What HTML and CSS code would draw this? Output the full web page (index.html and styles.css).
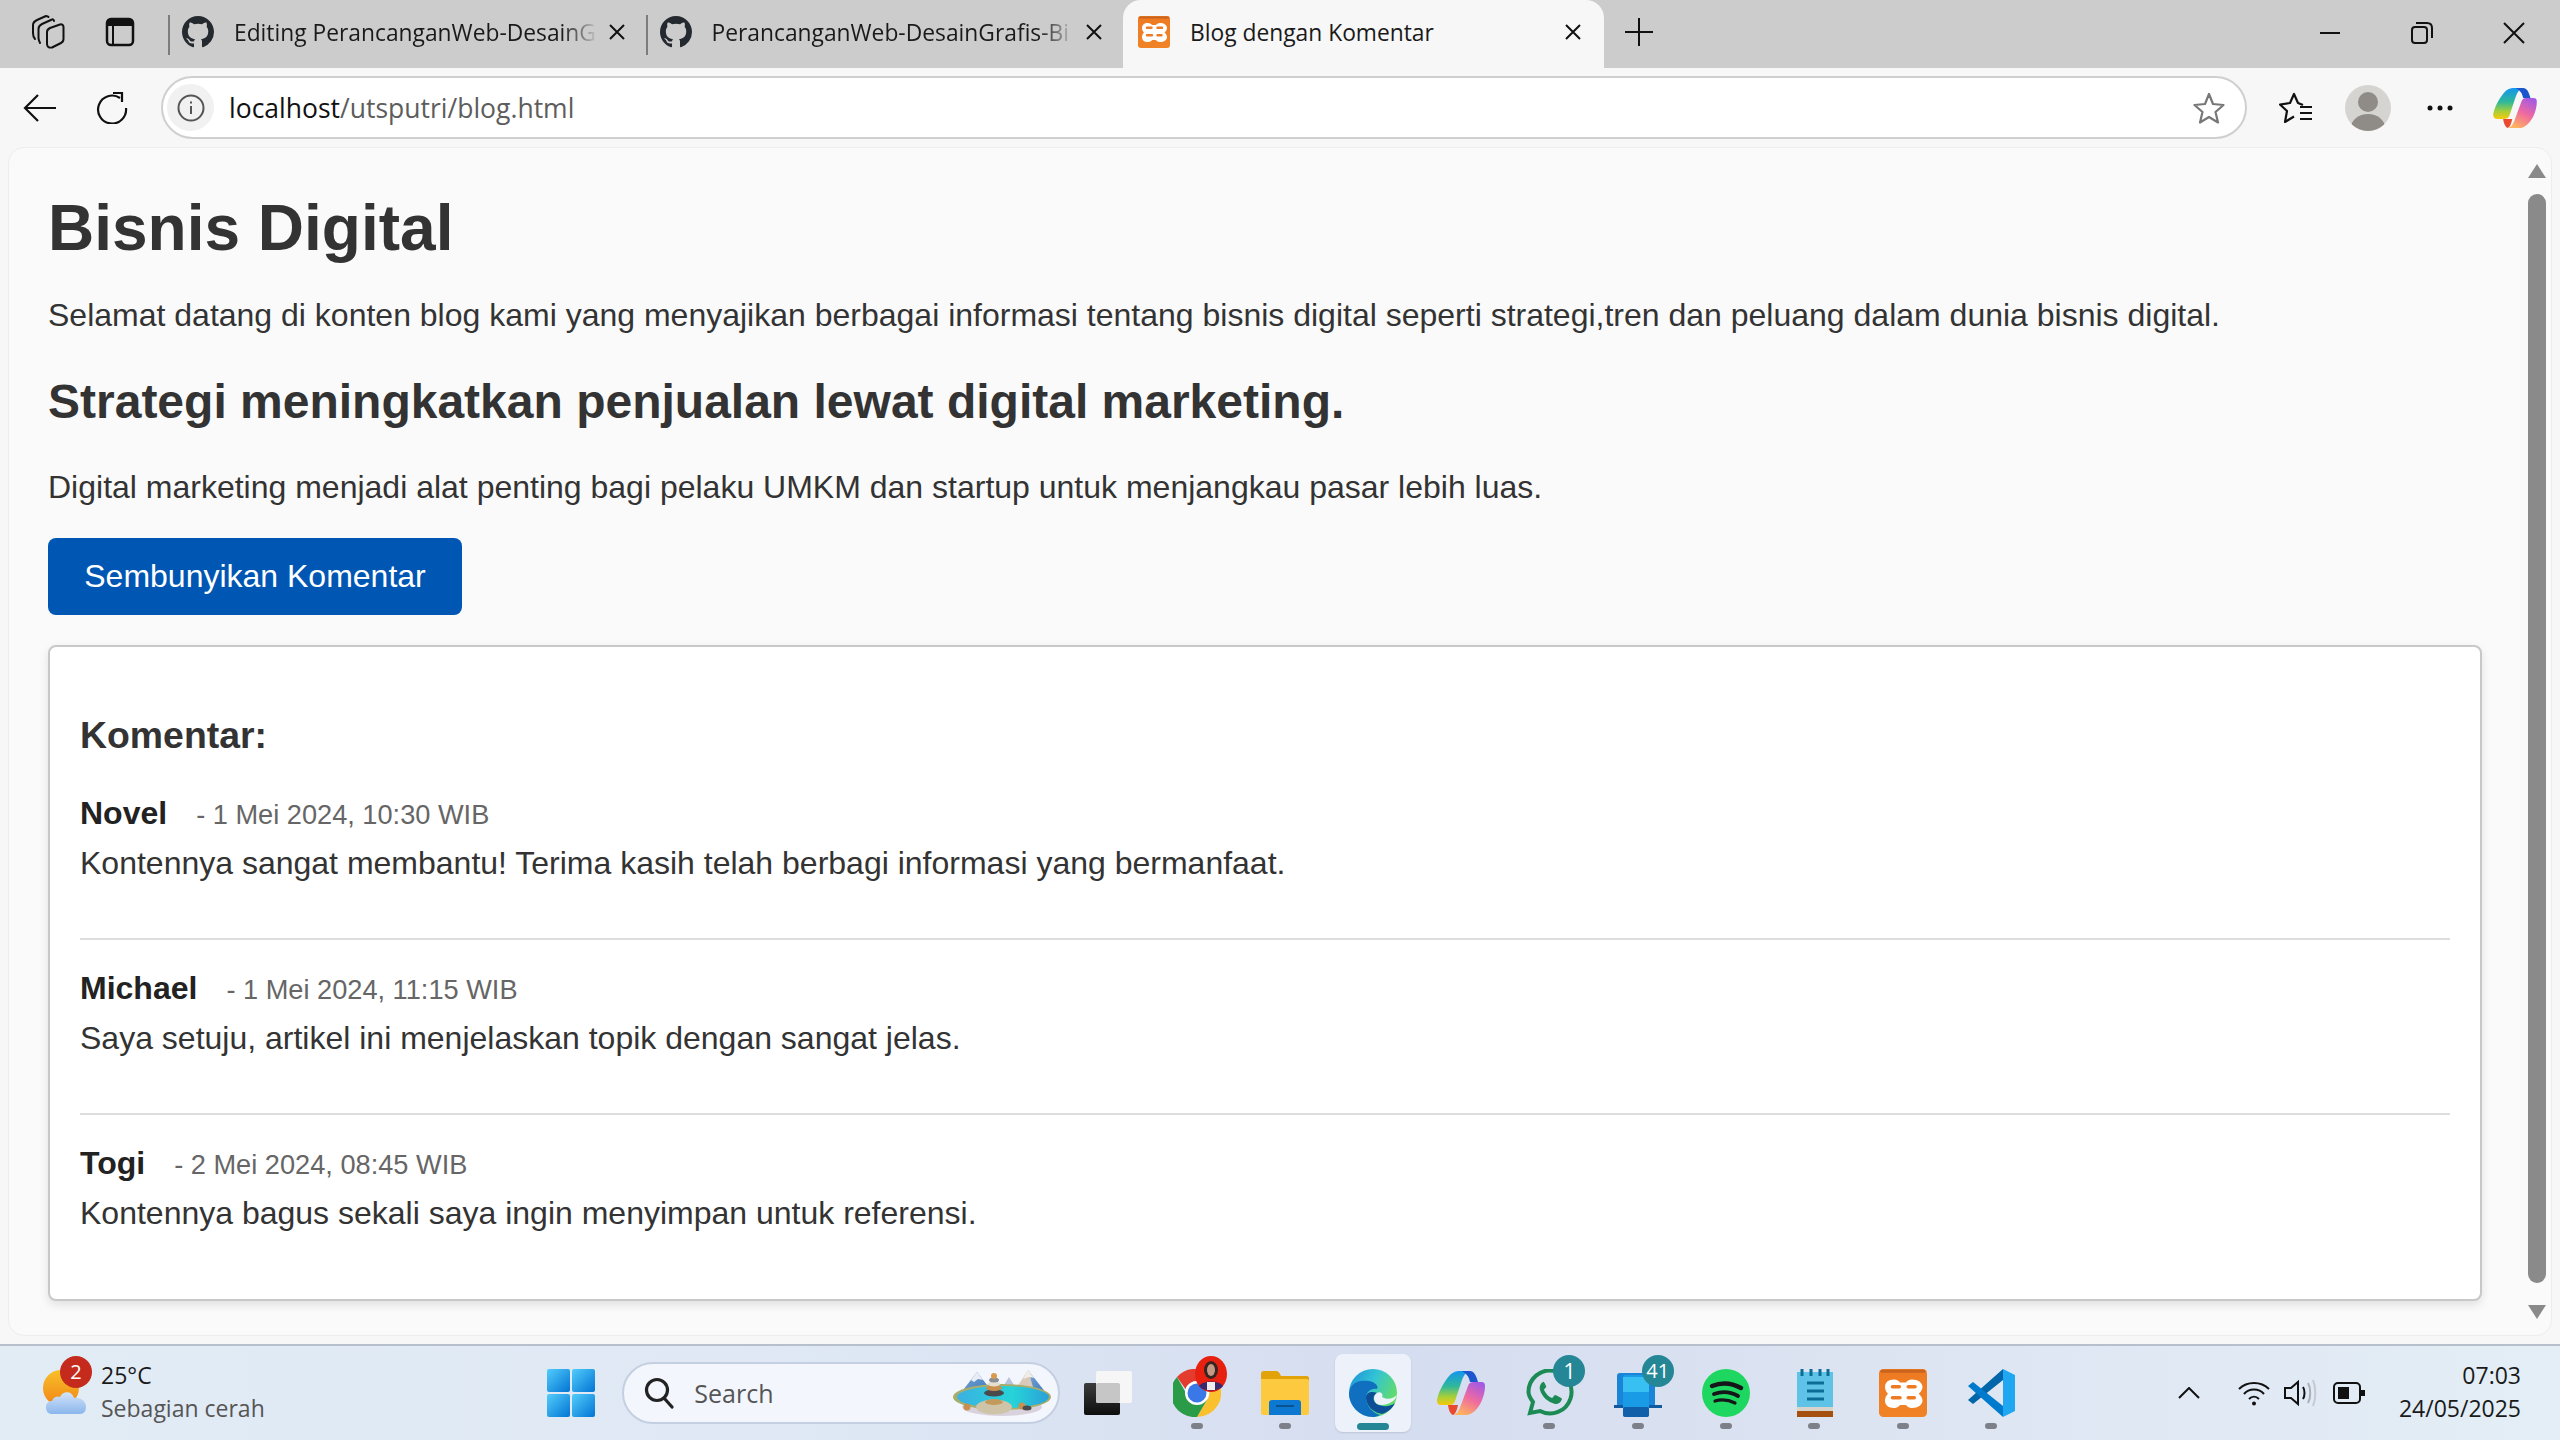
FILE: index.html
```html
<!DOCTYPE html>
<html>

<head>
    <title>Blog dengan Komentar</title>
    <link rel="stylesheet" href="styles.css">
</head>

<body>
    <!-- shared icons -->
    <svg class="defs" width="0" height="0">
        <defs>
            <linearGradient id="copLeft" x1="0" y1="0" x2="0" y2="1">
                <stop offset="0" stop-color="#1496ee" />
                <stop offset="0.45" stop-color="#2fb89a" />
                <stop offset="0.75" stop-color="#a5cf3a" />
                <stop offset="1" stop-color="#f7c90c" />
            </linearGradient>
            <linearGradient id="copRight" x1="0.8" y1="0" x2="0.3" y2="1">
                <stop offset="0" stop-color="#a259e6" />
                <stop offset="0.5" stop-color="#ee6aa0" />
                <stop offset="1" stop-color="#ffb35e" />
            </linearGradient>
            <linearGradient id="edgeRing" x1="0" y1="0" x2="1" y2="0.5">
                <stop offset="0" stop-color="#1a8fd8" />
                <stop offset="0.5" stop-color="#33c3d6" />
                <stop offset="1" stop-color="#62dd68" />
            </linearGradient>
            <linearGradient id="winPane" x1="0" y1="0" x2="1" y2="1">
                <stop offset="0" stop-color="#52cdfb" />
                <stop offset="1" stop-color="#0274d4" />
            </linearGradient>
            <linearGradient id="sunFill" x1="0" y1="0" x2="0" y2="1">
                <stop offset="0" stop-color="#f9c02a" />
                <stop offset="1" stop-color="#f08416" />
            </linearGradient>
            <linearGradient id="cloudFill" x1="0" y1="0" x2="0" y2="1">
                <stop offset="0" stop-color="#d3e3f9" />
                <stop offset="1" stop-color="#8ab6ec" />
            </linearGradient>
            <linearGradient id="xamppFill" x1="0" y1="0" x2="0" y2="1">
                <stop offset="0" stop-color="#ee7a22" />
                <stop offset="1" stop-color="#f08326" />
            </linearGradient>
            <linearGradient id="lakeFill" x1="0" y1="0" x2="1" y2="0">
                <stop offset="0" stop-color="#3bb0e2" />
                <stop offset="0.6" stop-color="#26d4d8" />
                <stop offset="1" stop-color="#2aa0d8" />
            </linearGradient>
            <linearGradient id="peakFill" x1="0" y1="0" x2="1" y2="1">
                <stop offset="0" stop-color="#7fa8d4" />
                <stop offset="1" stop-color="#2b6fb8" />
            </linearGradient>
            <linearGradient id="blackCard" x1="0" y1="0" x2="0" y2="1">
                <stop offset="0" stop-color="#3c3c3c" />
                <stop offset="1" stop-color="#0e0e0e" />
            </linearGradient>
            <symbol id="github" viewBox="0 0 16 16">
                <path fill="#24292f" d="M8 0C3.58 0 0 3.58 0 8c0 3.54 2.29 6.53 5.47 7.59.4.07.55-.17.55-.38 0-.19-.01-.82-.01-1.49-2.01.37-2.53-.49-2.69-.94-.09-.23-.48-.94-.82-1.13-.28-.15-.68-.52-.01-.53.63-.01 1.08.58 1.23.82.72 1.21 1.87.87 2.33.66.07-.52.28-.87.51-1.07-1.78-.2-3.64-.89-3.64-3.95 0-.87.31-1.59.82-2.15-.08-.2-.36-1.02.08-2.12 0 0 .67-.21 2.2.82.64-.18 1.32-.27 2-.27.68 0 1.36.09 2 .27 1.53-1.04 2.2-.82 2.2-.82.44 1.1.16 1.92.08 2.12.51.56.82 1.27.82 2.15 0 3.07-1.87 3.75-3.65 3.95.29.25.54.73.54 1.48 0 1.07-.01 1.93-.01 2.2 0 .21.15.46.55.38A8.013 8.013 0 0016 8c0-4.42-3.58-8-8-8z" />
            </symbol>
            <symbol id="xampp" viewBox="0 0 32 32">
                <rect width="32" height="32" rx="3" fill="url(#xamppFill)" />
                <rect x="1" y="0.500" width="30" height="2" rx="1" fill="#c9641c" />
                <path fill="#ffffff" d="M10 7C12 7 13.500 8 14 9H18C18.500 8 20 7 22 7C26 7 29 9 29 12C29 14 27.500 15.500 26.500 16.500C27.500 17.500 29 19 29 21C29 24 26 26 22 26C20 26 18.500 25 18 24H14C13.500 25 12 26 10 26C6 26 4 24 4 21C4 19 5 17.500 6 16.500C5 15.500 4 14 4 12C4 9 6 7 10 7Z" />
                <path fill="none" stroke="#ee7a22" stroke-width="2.400" stroke-linecap="round" d="M9 11.800H13.500M19.500 11.800H24M9 19.200H14M19.500 19.200H23.500" />
            </symbol>
            <symbol id="copilot" viewBox="0 0 48 44">
                <path fill="url(#copLeft)" d="M14 3C17 1 19 0 22 0H33C29 1 27 4 25 9L18 30C17 33 15 34 12 34H4C1 34 0 32 0 29C1 22 7 10 14 3Z" />
                <path fill="#1c55cc" d="M25 0H33C37 0 39 4 41 11H33C32 6 30 3 25 0Z" />
                <path fill="url(#copRight)" d="M48 15C48 26 42 38 35 42C33 43.500 31 44 28 44H16C20 43 22 40 24 34L31 15C32 12 34 11 36 11H44C47 11 48 12 48 15Z" />
                <path fill="#e8492f" d="M11 34H21L20 38C19 41 18 43 16 44C13 43 11.500 38 11 34Z" />
            </symbol>
        </defs>
    </svg>

    <header class="tabstrip">
        <div class="strip-btn">
            <svg width="33" height="34" viewBox="0 0 33 34" fill="none" stroke="#111" stroke-width="2" stroke-linecap="round" stroke-linejoin="round">
                <path d="M3 24C1 22 1 20 1 18V10C1 7 3 6 5 5L14 1C15 1 16 1 16.500 2" />
                <path d="M8 28C7 26 6.500 25 6.500 23V14C6.500 11 8 10 10 9L20 4.500C21 4 22 5 22 6" />
                <path d="M15 17C15 15 16 14 18 13L28 9.500C30 9 31.500 10 31.500 12V24C31.500 26 31 27 29 28L20 32.500C17 33 15 32 15 29Z" />
            </svg>
        </div>
        <div class="strip-btn">
            <svg width="30" height="30" viewBox="0 0 30 30">
                <rect x="2" y="2" width="26" height="26" rx="4" fill="none" stroke="#111" stroke-width="2.500" />
                <path fill="#111" d="M2 6a4 4 0 0 1 4-4h18a4 4 0 0 1 4 4v3H2z" />
                <path stroke="#111" stroke-width="2" d="M8 8V28" />
            </svg>
        </div>
        <div class="tab tab-first">
            <svg class="favicon" width="32" height="32"><use href="#github" /></svg>
            <span class="tab-title">Editing PerancanganWeb-DesainG</span>
            <span class="tab-close">
                <svg width="18" height="18" viewBox="0 0 18 18" stroke="#111" stroke-width="2"><path d="M2 2L16 16M16 2L2 16" /></svg>
            </span>
        </div>
        <div class="tab">
            <svg class="favicon" width="32" height="32"><use href="#github" /></svg>
            <span class="tab-title">PerancanganWeb-DesainGrafis-Bi</span>
            <span class="tab-close">
                <svg width="18" height="18" viewBox="0 0 18 18" stroke="#111" stroke-width="2"><path d="M2 2L16 16M16 2L2 16" /></svg>
            </span>
        </div>
        <div class="tab tab-active">
            <svg class="favicon" width="32" height="32"><use href="#xampp" /></svg>
            <span class="tab-title">Blog dengan Komentar</span>
            <span class="tab-close">
                <svg width="18" height="18" viewBox="0 0 18 18" stroke="#111" stroke-width="2"><path d="M2 2L16 16M16 2L2 16" /></svg>
            </span>
        </div>
        <div class="new-tab">
            <svg width="30" height="30" viewBox="0 0 30 30" stroke="#111" stroke-width="2"><path d="M15 1V29M1 15H29" /></svg>
        </div>
        <div class="win-controls">
            <div class="win-btn">
                <svg width="22" height="4" viewBox="0 0 22 4" stroke="#111" stroke-width="2"><path d="M1 2H21" /></svg>
            </div>
            <div class="win-btn">
                <svg width="22" height="22" viewBox="0 0 22 22" fill="none" stroke="#111" stroke-width="2">
                    <rect x="1" y="5" width="15" height="16" rx="3" />
                    <path d="M5 1H16C19 1 21 3 21 6V16" />
                </svg>
            </div>
            <div class="win-btn">
                <svg width="22" height="22" viewBox="0 0 22 22" stroke="#111" stroke-width="2"><path d="M1 1L21 21M21 1L1 21" /></svg>
            </div>
        </div>
    </header>

    <nav class="toolbar">
        <div class="tool-btn">
            <svg width="34" height="30" viewBox="0 0 34 30" fill="none" stroke="#111" stroke-width="2.200"><path d="M33 15H2M15 2L2 15L15 28" /></svg>
        </div>
        <div class="tool-btn">
            <svg width="32" height="32" viewBox="0 0 32 32" fill="none" stroke="#111" stroke-width="2.200">
                <path d="M24 6A14 14 0 1 0 30 16" />
                <path d="M17 1H26V10" />
            </svg>
        </div>
        <div class="addressbar">
            <span class="site-info">
                <svg width="28" height="28" viewBox="0 0 28 28" fill="none" stroke="#555" stroke-width="2">
                    <circle cx="14" cy="14" r="12.500" />
                    <path d="M14 12V20M14 7.500V9.500" />
                </svg>
            </span>
            <span class="url"><span class="url-host">localhost</span>/utsputri/blog.html</span>
            <svg class="url-star" width="32" height="32" viewBox="0 0 32 32" fill="none" stroke="#777" stroke-width="2.200" stroke-linejoin="round">
                <path d="M16 2L20 12L30.500 13L22.500 20L25 30.500L16 25L7 30.500L9.500 20L1.500 13L12 12Z" />
            </svg>
        </div>
        <div class="tool-right">
            <div class="tool-btn tool-fav">
                <svg width="34" height="32" viewBox="0 0 34 32" fill="none" stroke="#111" stroke-width="2.200" stroke-linejoin="round">
                    <path d="M24 13L19 11L15 2L11 11L1 12.500L8 19L6 30L15 24.500" />
                    <path d="M21 15H33M21 21H33M21 27H33" />
                </svg>
            </div>
            <div class="avatar">
                <svg width="46" height="46" viewBox="0 0 46 46">
                    <clipPath id="avatarClip"><circle cx="23" cy="23" r="23" /></clipPath>
                    <circle cx="23" cy="23" r="23" fill="#d5d4d0" />
                    <g clip-path="url(#avatarClip)" fill="#8f8b87">
                        <circle cx="23" cy="17" r="10" />
                        <ellipse cx="23" cy="43" rx="17" ry="14" />
                    </g>
                </svg>
            </div>
            <div class="tool-btn tool-more">
                <svg width="26" height="6" viewBox="0 0 26 6" fill="#111"><circle cx="3" cy="3" r="2.500" /><circle cx="13" cy="3" r="2.500" /><circle cx="23" cy="3" r="2.500" /></svg>
            </div>
            <div class="tool-btn tool-copilot">
                <svg width="44" height="40"><use href="#copilot" /></svg>
            </div>
        </div>
    </nav>

    <div class="viewport">
        <main class="page">
            <h1>Bisnis Digital</h1>
            <p>Selamat datang di konten blog kami yang menyajikan berbagai informasi tentang bisnis digital seperti strategi,tren dan peluang dalam dunia bisnis digital.</p>
            <h2>Strategi meningkatkan penjualan lewat digital marketing.</h2>
            <p class="intro">Digital marketing menjadi alat penting bagi pelaku UMKM dan startup untuk menjangkau pasar lebih luas.</p>
            <button type="button" class="toggle-btn">Sembunyikan Komentar</button>

            <section class="comments">
                <h3>Komentar:</h3>
                <div class="comment">
                    <div class="comment-meta"><strong>Novel</strong><span>- 1 Mei 2024, 10:30 WIB</span></div>
                    <p>Kontennya sangat membantu! Terima kasih telah berbagi informasi yang bermanfaat.</p>
                </div>
                <div class="comment">
                    <div class="comment-meta"><strong>Michael</strong><span>- 1 Mei 2024, 11:15 WIB</span></div>
                    <p>Saya setuju, artikel ini menjelaskan topik dengan sangat jelas.</p>
                </div>
                <div class="comment comment-last">
                    <div class="comment-meta"><strong>Togi</strong><span>- 2 Mei 2024, 08:45 WIB</span></div>
                    <p>Kontennya bagus sekali saya ingin menyimpan untuk referensi.</p>
                </div>
            </section>
        </main>
        <div class="scrollbar">
            <span class="arrow-up"></span>
            <span class="thumb"></span>
            <span class="arrow-down"></span>
        </div>
    </div>

    <footer class="taskbar">
        <div class="weather">
            <div class="weather-icon">
                <svg width="46" height="46" viewBox="0 0 46 46">
                    <circle cx="19" cy="18" r="18" fill="url(#sunFill)" />
                    <path fill="url(#cloudFill)" d="M10 44C5 44 4 40 4 37C4 33 7 31 10 31C12 26 16 26 18 27C20 21 30 20 32 28C38 27 44 31 44 37C44 41 42 44 38 44Z" />
                </svg>
                <span class="weather-badge">2</span>
            </div>
            <div class="weather-text">
                <span class="weather-temp">25°C</span>
                <span class="weather-desc">Sebagian cerah</span>
            </div>
        </div>

        <div class="task-item">
            <svg width="48" height="48" viewBox="0 0 48 48">
                <rect x="0" y="0" width="23" height="23" rx="2" fill="url(#winPane)" />
                <rect x="25" y="0" width="23" height="23" rx="2" fill="url(#winPane)" />
                <rect x="0" y="25" width="23" height="23" rx="2" fill="url(#winPane)" />
                <rect x="25" y="25" width="23" height="23" rx="2" fill="url(#winPane)" />
            </svg>
        </div>

        <div class="search">
            <svg width="32" height="32" viewBox="0 0 32 32" fill="none" stroke="#222" stroke-width="3.200">
                <circle cx="14" cy="13" r="10.500" />
                <path d="M21 21L29 30" stroke-linecap="round" />
            </svg>
            <span class="search-label">Search</span>
            <svg class="search-scene" width="100" height="46" viewBox="0 0 100 46">
                <path fill="url(#peakFill)" d="M5 28L25 2L45 28Z" />
                <path fill="#e9edf3" d="M25 2L31 10L26 9L22 12L19 10Z" />
                <path fill="#b9c3dc" d="M44 28L57 7L70 28Z" />
                <path fill="#d9c9b9" d="M58 28L76 0L84 28Z" />
                <path fill="url(#peakFill)" d="M76 0L98 28H84Z" />
                <path fill="#f0ece8" d="M76 0L82 8L77 7L71 9Z" />
                <ellipse cx="50" cy="37" rx="40" ry="9" fill="#d9d2dc" />
                <ellipse cx="50" cy="27" rx="49" ry="13" fill="#a9ad6c" />
                <ellipse cx="51" cy="27" rx="46" ry="11" fill="url(#lakeFill)" />
                <ellipse cx="42" cy="37" rx="18" ry="7.500" fill="#cfc4a8" />
                <ellipse cx="42" cy="32" rx="9" ry="3" fill="#c49a5c" />
                <ellipse cx="42" cy="23" rx="10" ry="3.500" fill="#4a4a4c" />
                <ellipse cx="42" cy="18" rx="8" ry="3" fill="#c98f4e" />
                <ellipse cx="42" cy="14" rx="6" ry="2.500" fill="#e6dfcf" />
                <ellipse cx="42" cy="10" rx="5" ry="2.500" fill="#8a8f96" />
                <circle cx="42" cy="6" r="3" fill="#d89a4c" />
                <circle cx="15" cy="37" r="3.500" fill="#c98f4e" />
                <circle cx="70" cy="36" r="3.500" fill="#c98f4e" />
                <ellipse cx="75" cy="38" rx="4.500" ry="2.500" fill="#4a4a4c" />
            </svg>
        </div>

        <div class="task-item task-view">
            <svg width="48" height="44" viewBox="0 0 48 44">
                <rect x="0" y="12" width="36" height="32" rx="2" fill="url(#blackCard)" />
                <rect x="12" y="0" width="36" height="32" rx="2" fill="#f6f6f6" />
                <rect x="12" y="12" width="24" height="20" rx="2" fill="#c6c6c6" />
            </svg>
        </div>
        <div class="task-item running">
            <svg width="48" height="48" viewBox="0 0 48 48">
                <path fill="#e33b2e" d="M24 0A24 24 0 0 1 45 12H24A12 12 0 0 0 12.500 20L4 8A24 24 0 0 1 24 0Z" />
                <path fill="#fbc02d" d="M45 12A24 24 0 0 1 24 48L34.500 30A12 12 0 0 0 34 16L24 12Z" />
                <path fill="#2a9b47" d="M24 48A24 24 0 0 1 4 8L14 26A12 12 0 0 0 34.500 30Z" />
                <circle cx="24" cy="24" r="12" fill="#fff" />
                <circle cx="24" cy="24" r="9.500" fill="#3b78e7" />
            </svg>
            <svg class="chrome-avatar" width="32" height="36" viewBox="0 0 32 36">
                <ellipse cx="16" cy="18" rx="16" ry="18" fill="#e8200f" />
                <path fill="#3b2a6b" d="M4 30C8 24 24 24 28 30C24 36 8 36 4 30Z" />
                <ellipse cx="16" cy="14" rx="7" ry="9" fill="#3a2320" />
                <ellipse cx="16" cy="14" rx="4" ry="6" fill="#c49a85" />
                <rect x="12" y="26" width="8" height="8" fill="#eee" />
            </svg>
        </div>
        <div class="task-item running">
            <svg width="48" height="44" viewBox="0 0 48 44">
                <path fill="#e2a20a" d="M0 3C0 1 1 0 3 0H15C17 0 18 1 19 3L20 5H46C47 5 48 6 48 7V10H0Z" />
                <path fill="#fdc93f" d="M0 8H46C47 8 48 9 48 10V42C48 43 47 44 46 44H2C1 44 0 43 0 42Z" />
                <path fill="#0c78d2" d="M8 44V32C8 30 9 29 11 29H37C39 29 40 30 40 32V44Z" />
                <rect x="15" y="34" width="18" height="2" fill="#07528f" />
            </svg>
        </div>
        <div class="task-item task-active">
            <svg width="48" height="48" viewBox="0 0 48 48">
                <circle cx="24" cy="24" r="24" fill="url(#edgeRing)" />
                <path fill="#116fbf" d="M0 24C2 12 12 11 20 12C26 13 30 17 28 20C22 19 17 23 17 29C17 37 24 44 31 46C28 47.500 26 48 24 48C10 48 0 36 0 24Z" />
                <path fill="#0d4f96" d="M17 29C17 37 25 44 33 45C39 43 44 39 46 34C41 38 33 38 28 35C23 32 24 26 28 24C23 22 17 23 17 29Z" />
                <path fill="#edf1f9" d="M28 24C31 22 35 25 33 28C38 31 44 30 48 26C46 34 34 38 28 35C24 32 24 26 28 24Z" />
            </svg>
        </div>
        <div class="task-item">
            <svg width="48" height="44"><use href="#copilot" /></svg>
        </div>
        <div class="task-item running">
            <svg width="48" height="48" viewBox="0 0 48 48">
                <path fill="none" stroke="#1c8a55" stroke-width="4" d="M4 44L7 33C4 29 2.500 26 2.500 23A21.500 21.500 0 1 1 14 42Z" />
                <path fill="#1c8a55" d="M17 13C15 14 13 17 14 21C16 28 22 33 29 35C33 35 35 33 36 30C36 29 30 26 29 26C28 26 27 29 26 29C23 28 20 25 18 21C18 20 21 18 20 17C19 15 18 12 17 13Z" />
            </svg>
            <span class="task-badge">1</span>
        </div>
        <div class="task-item running">
            <svg width="48" height="48" viewBox="0 0 48 48">
                <rect x="3" y="4" width="38" height="34" rx="3" fill="#1984d8" />
                <rect x="0" y="36" width="48" height="3" fill="#11589e" />
                <rect x="9" y="6" width="26" height="42" rx="3" fill="#1a9be6" />
                <rect x="9" y="8" width="26" height="15" fill="#38c0f2" />
                <rect x="9" y="38" width="26" height="10" rx="2" fill="#105fa8" />
            </svg>
            <span class="task-badge task-badge-wide">41</span>
        </div>
        <div class="task-item running">
            <svg width="48" height="48" viewBox="0 0 48 48" fill="none" stroke="#15151a" stroke-linecap="round">
                <circle cx="24" cy="24" r="24" fill="#1ed760" stroke="none" />
                <path d="M10 17C20 13 30 14 39 19" stroke-width="4.500" />
                <path d="M12 25C20 22 29 23 36 27" stroke-width="3.800" />
                <path d="M13 32C20 30 27 31 33 34" stroke-width="3.200" />
            </svg>
        </div>
        <div class="task-item running">
            <svg width="36" height="48" viewBox="0 0 36 48">
                <rect x="0" y="3" width="36" height="37" fill="#5ec3e6" />
                <rect x="0" y="38" width="36" height="4" fill="#d8d4cc" />
                <rect x="0" y="42" width="36" height="6" fill="#a5500f" />
                <path stroke="#0b6d96" stroke-width="3" d="M5 0V7M14 0V7M23 0V7M31 0V7" />
                <path stroke="#0b6d96" stroke-width="3" d="M10 14H27M10 22H27M10 30H27" />
            </svg>
        </div>
        <div class="task-item running">
            <svg width="48" height="48"><use href="#xampp" /></svg>
        </div>
        <div class="task-item running">
            <svg width="48" height="48" viewBox="0 0 48 48">
                <path fill="#0065a9" d="M36 0V11L6 35L1 31Z" />
                <path fill="#007acc" d="M1 17L6 13L36 37V48Z" />
                <path fill="#1fa8f1" d="M36 0L48 6V42L36 48Z" />
            </svg>
        </div>

        <div class="tray">
            <svg class="tray-chevron" width="22" height="12" viewBox="0 0 22 12" fill="none" stroke="#111" stroke-width="2"><path d="M1 11L11 1L21 11" /></svg>
            <svg class="tray-wifi" width="32" height="26" viewBox="0 0 32 26" fill="none" stroke="#111" stroke-width="2">
                <path d="M1 9C9 1 23 1 31 9M6 14C11 8 21 8 26 14M11 19C14 16 18 16 21 19" />
                <circle cx="16" cy="23.500" r="2" fill="#111" stroke="none" />
            </svg>
            <svg class="tray-volume" width="34" height="30" viewBox="0 0 34 30" fill="none" stroke="#111" stroke-width="2">
                <path d="M2 10H8L15 4V26L8 20H2Z" />
                <path d="M20 9C22 12 22 18 20 21" />
                <path d="M25 5C28 10 28 20 25 25" stroke="#a9afb8" />
                <path d="M30 2C33 9 33 21 30 28" stroke="#c5cad2" />
            </svg>
            <svg class="tray-battery" width="32" height="22" viewBox="0 0 32 22" fill="none" stroke="#111" stroke-width="2">
                <rect x="1" y="1" width="26" height="20" rx="4" />
                <rect x="5" y="5" width="11" height="12" fill="#111" stroke="none" />
                <rect x="28" y="8" width="4" height="6" fill="#111" stroke="none" />
            </svg>
            <div class="clock">
                <span>07:03</span>
                <span>24/05/2025</span>
            </div>
        </div>
    </footer>
</body>

</html>
```

FILE: styles.css
```css
* {
    box-sizing: border-box;
}

html,
body {
    height: 100%;
}

body {
    margin: 0;
    display: flex;
    flex-direction: column;
    height: 1440px;
    overflow: hidden;
    font-family: "Liberation Sans", Arial, sans-serif;
    background-color: #f7f7f7;
    color: #333333;
}

.defs {
    display: block;
    height: 0;
}

/* browser tab strip */
.tabstrip {
    display: flex;
    align-items: stretch;
    height: 68px;
    padding-left: 12px;
    background-color: #cccccc;
    font-family: "Open Sans", sans-serif;
    font-size: 22.800px;
    color: #1a1a1a;
}

.strip-btn {
    display: flex;
    align-items: center;
    justify-content: center;
    width: 72px;
    padding-bottom: 4px;
}

.tab {
    position: relative;
    display: flex;
    align-items: center;
    width: 477.500px;
    padding: 0 20px 4px 14px;
}

.tab::before {
    content: "";
    position: absolute;
    left: 0;
    top: 15px;
    height: 40px;
    border-left: 2px solid #7c7c7c;
}

.tab-first {
    margin-left: 12px;
}

.tab-active {
    width: 481px;
    padding-left: 15px;
    padding-right: 22px;
    background-color: #f7f7f7;
    border-radius: 18px 18px 0 0;
}

.tab-active::before {
    display: none;
}

.favicon {
    flex: none;
}

.tab-title {
    flex: 1;
    margin-left: 20px;
    overflow: hidden;
    white-space: nowrap;
    -webkit-mask-image: linear-gradient(to left, transparent 0, #000 36px);
    mask-image: linear-gradient(to left, transparent 0, #000 36px);
}

.tab-active .tab-title {
    -webkit-mask-image: none;
    mask-image: none;
}

.tab-close {
    display: flex;
    margin-left: 10px;
}

.new-tab {
    display: flex;
    align-items: center;
    margin-left: 20px;
    padding-bottom: 4px;
}

.win-controls {
    display: flex;
    margin-left: auto;
    padding-bottom: 2px;
}

.win-btn {
    display: flex;
    align-items: center;
    justify-content: center;
    width: 92px;
}

/* address bar row */
.toolbar {
    display: flex;
    align-items: center;
    height: 79px;
    background-color: #f7f7f7;
}

.tool-btn {
    display: flex;
    align-items: center;
    justify-content: center;
    width: 72px;
    height: 64px;
}

.toolbar > .tool-btn:first-child {
    margin-left: 4px;
}

.addressbar {
    display: flex;
    align-items: center;
    width: 2086px;
    height: 63px;
    margin-left: 13px;
    padding: 0 20px 0 4px;
    background-color: #ffffff;
    border: 2px solid #cfcfcf;
    border-radius: 32px;
}

.site-info {
    display: flex;
    align-items: center;
    justify-content: center;
    width: 47px;
    height: 47px;
    background-color: #f1f1f1;
    border-radius: 50%;
}

.url {
    margin-left: 15px;
    font-family: "Open Sans", sans-serif;
    font-size: 26.500px;
    color: #5d5d5d;
}

.url-host {
    color: #111111;
}

.url-star {
    margin-left: auto;
}

.tool-right {
    display: flex;
    align-items: center;
    flex: 1;
    padding-left: 13px;
}

.avatar {
    display: flex;
    justify-content: center;
    width: 72px;
}

.tool-copilot {
    margin-left: 3px;
}

/* page area */
.viewport {
    display: flex;
    height: 1189px;
    margin: 0 8px;
    background-color: #fafafa;
    border: 1px solid #ededed;
    border-radius: 16px;
}

.page {
    flex: 1;
    padding: 43px 0 0 39px;
    min-width: 0;
}

h1 {
    margin: 0;
    font-size: 64px;
    line-height: 74px;
}

h2 {
    margin: 34px 0 0;
    font-size: 48px;
    line-height: 56px;
}

p {
    margin: 0;
    font-size: 32px;
    line-height: 50px;
}

.page > p {
    margin-top: 25px;
}

.page > p.intro {
    margin-top: 32px;
}

.toggle-btn {
    display: block;
    width: 414px;
    height: 77px;
    margin-top: 26px;
    padding: 0;
    background-color: #0056b3;
    color: #ffffff;
    border: none;
    border-radius: 8px;
    font-family: "Liberation Sans", Arial, sans-serif;
    font-size: 32px;
}

.comments {
    width: 2434px;
    height: 656px;
    margin-top: 30px;
    padding: 66px 30px 0;
    background-color: #ffffff;
    border: 2px solid #c8c8c8;
    border-radius: 8px;
    box-shadow: 0 4px 10px rgba(0, 0, 0, 0.1);
}

h3 {
    margin: 0;
    font-size: 37.400px;
    line-height: 44px;
}

.comment {
    margin-top: 25px;
    padding-bottom: 50px;
    border-bottom: 2px solid #dddddd;
}

h3 + .comment {
    margin-top: 33px;
}

.comment-last {
    border-bottom: none;
}

.comment-meta {
    display: flex;
    align-items: baseline;
    gap: 29px;
    line-height: 47px;
}

.comment-meta strong {
    font-size: 32px;
    color: #222222;
}

.comment-meta span {
    font-size: 27.200px;
    color: #666666;
}

.scrollbar {
    display: flex;
    flex-direction: column;
    align-items: center;
    width: 28px;
    padding: 16px 0;
    margin-left: auto;
}

.thumb {
    flex: 1;
    width: 18px;
    margin: 16px 0 22px;
    background-color: #8a8a8a;
    border-radius: 9px;
}

.arrow-up {
    border-left: 9px solid transparent;
    border-right: 9px solid transparent;
    border-bottom: 14px solid #8a8a8a;
}

.arrow-down {
    border-left: 9px solid transparent;
    border-right: 9px solid transparent;
    border-top: 14px solid #8a8a8a;
}

/* windows taskbar */
.taskbar {
    display: flex;
    align-items: center;
    height: 96px;
    margin-top: auto;
    background: linear-gradient(to right, #e2ecf5 0%, #dfe8f4 30%, #d5ddf0 55%, #dde5f2 75%, #e4eef6 100%);
    border-top: 2px solid #b6bfcb;
    font-family: "Open Sans", sans-serif;
    color: #1a1a1a;
}

.weather {
    display: flex;
    align-items: center;
    width: 527px;
    padding-left: 42px;
}

.weather-icon {
    position: relative;
    width: 46px;
    height: 46px;
}

.weather-badge {
    position: absolute;
    left: 18px;
    top: -14px;
    width: 32px;
    height: 32px;
    line-height: 32px;
    border-radius: 50%;
    background-color: #c42b1c;
    color: #ffffff;
    text-align: center;
    font-size: 20px;
}

.weather-text {
    display: flex;
    flex-direction: column;
    margin-left: 13px;
    padding-bottom: 2px;
    font-size: 23px;
    line-height: 33px;
}

.weather-desc {
    color: #555555;
}

.task-item {
    position: relative;
    display: flex;
    align-items: center;
    justify-content: center;
    flex: none;
    width: 88.300px;
    height: 90px;
}

.task-view {
    margin-left: 4px;
}

/* little dot under a running app */
.running::after {
    content: "";
    position: absolute;
    left: 38px;
    bottom: 9px;
    width: 12px;
    height: 6px;
    border-radius: 3px;
    background-color: #7d8088;
}

.task-active {
    width: 76px;
    height: 78px;
    margin: 0 6px;
    background-color: #edf1f9;
    border-radius: 8px;
    box-shadow: 0 1px 2px rgba(0, 0, 0, 0.12);
}

.task-active::after {
    content: "";
    position: absolute;
    left: 22px;
    bottom: 2px;
    width: 32px;
    height: 7px;
    border-radius: 4px;
    background-color: #258696;
}

.chrome-avatar {
    position: absolute;
    left: 42px;
    top: 8px;
}

.task-badge {
    position: absolute;
    left: 48px;
    top: 7px;
    width: 32px;
    height: 32px;
    line-height: 32px;
    border-radius: 50%;
    background-color: #258696;
    color: #ffffff;
    text-align: center;
    font-size: 21px;
}

.task-badge-wide {
    font-size: 20px;
}

.search {
    display: flex;
    align-items: center;
    flex: none;
    width: 438px;
    height: 62px;
    margin-left: 7px;
    padding-left: 19px;
    background-color: #f3f6fd;
    border: 2px solid #c5cfe2;
    border-radius: 31px;
}

.search-label {
    margin-left: 19px;
    font-size: 25px;
    color: #555555;
}

.search-scene {
    margin-left: auto;
    margin-right: 6px;
}

.tray {
    display: flex;
    align-items: center;
    margin-left: auto;
    padding-right: 39px;
}

.tray-wifi {
    margin-left: 38px;
}

.tray-volume {
    margin-left: 13px;
}

.tray-battery {
    margin-left: 16px;
}

.clock {
    display: flex;
    flex-direction: column;
    align-items: flex-end;
    margin-left: 34px;
    padding-bottom: 2px;
    font-size: 23px;
    line-height: 33px;
}
```
